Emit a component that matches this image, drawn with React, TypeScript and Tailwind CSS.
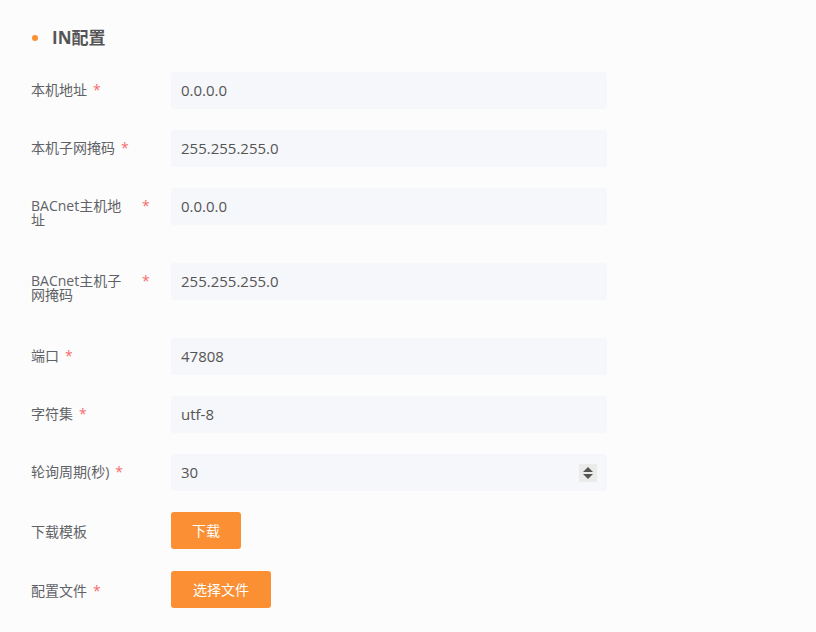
import React from "react";

const rows: { label: string; value: string; req: boolean; two?: boolean; spin?: boolean }[] = [
  { label: "本机地址", value: "0.0.0.0", req: true },
  { label: "本机子网掩码", value: "255.255.255.0", req: true },
  { label: "BACnet主机地址", value: "0.0.0.0", req: true, two: true },
  { label: "BACnet主机子网掩码", value: "255.255.255.0", req: true, two: true },
  { label: "端口", value: "47808", req: true },
  { label: "字符集", value: "utf-8", req: true },
  { label: "轮询周期(秒)", value: "30", req: true, spin: true },
];

const Star = () => <span className="text-[#f56c6c] ml-[6px]">*</span>;

export default function App() {
  return (
    <div className="w-[816px] h-[632px] bg-[#fcfcfc] text-[#5f6266] text-[14px]" style={{ fontFamily: '"Open Sans","Noto Sans CJK SC",sans-serif' }}>
      <div className="pt-[26px] pl-[31px]">
        <div className="flex items-center h-[24px]">
          <span className="w-[6px] h-[6px] rounded-full bg-[#fb8f34] ml-[1px]" />
          <span className="ml-[14px] font-bold text-[17px] text-[#555]">IN配置</span>
        </div>
        <div className="mt-[22px]">
          {rows.map((r) => (
            <div key={r.label} className={`flex ${r.two ? "mb-[36px]" : "mb-[21px]"}`}>
              <div className="w-[140px] pt-[11px] flex items-start leading-[14px]">
                {r.two ? (
                  <>
                    <span className="w-[102px] break-all">{r.label}</span>
                    <span className="text-[#f56c6c] ml-[9px]">*</span>
                  </>
                ) : (
                  <>
                    <span>{r.label}</span>
                    {r.req && <Star />}
                  </>
                )}
              </div>
              <div className="w-[436px] h-[37px] bg-[#f5f7fa] rounded-[3px] flex items-center pl-[10px] pr-[10px] text-[15px] text-[#555]">
                <span className="flex-1">{r.value}</span>
                {r.spin && (
                  <span className="w-[18px] h-[18px] bg-[#ebebeb] flex flex-col items-center justify-center gap-[2px]">
                    <span className="w-0 h-0 border-l-[5px] border-r-[5px] border-b-[5px] border-l-transparent border-r-transparent border-b-[#555]" />
                    <span className="w-0 h-0 border-l-[5px] border-r-[5px] border-t-[5px] border-l-transparent border-r-transparent border-t-[#555]" />
                  </span>
                )}
              </div>
            </div>
          ))}
          <div className="flex mb-[22px]">
            <div className="w-[140px] pt-[9px]">下载模板</div>
            <button className="h-[37px] w-[70px] bg-[#fb8f34] text-white rounded-[3px] text-[14px]">下载</button>
          </div>
          <div className="flex">
            <div className="w-[140px] pt-[9px]">配置文件<Star /></div>
            <button className="h-[37px] w-[100px] bg-[#fb8f34] text-white rounded-[3px] text-[14px]">选择文件</button>
          </div>
        </div>
      </div>
    </div>
  );
}
